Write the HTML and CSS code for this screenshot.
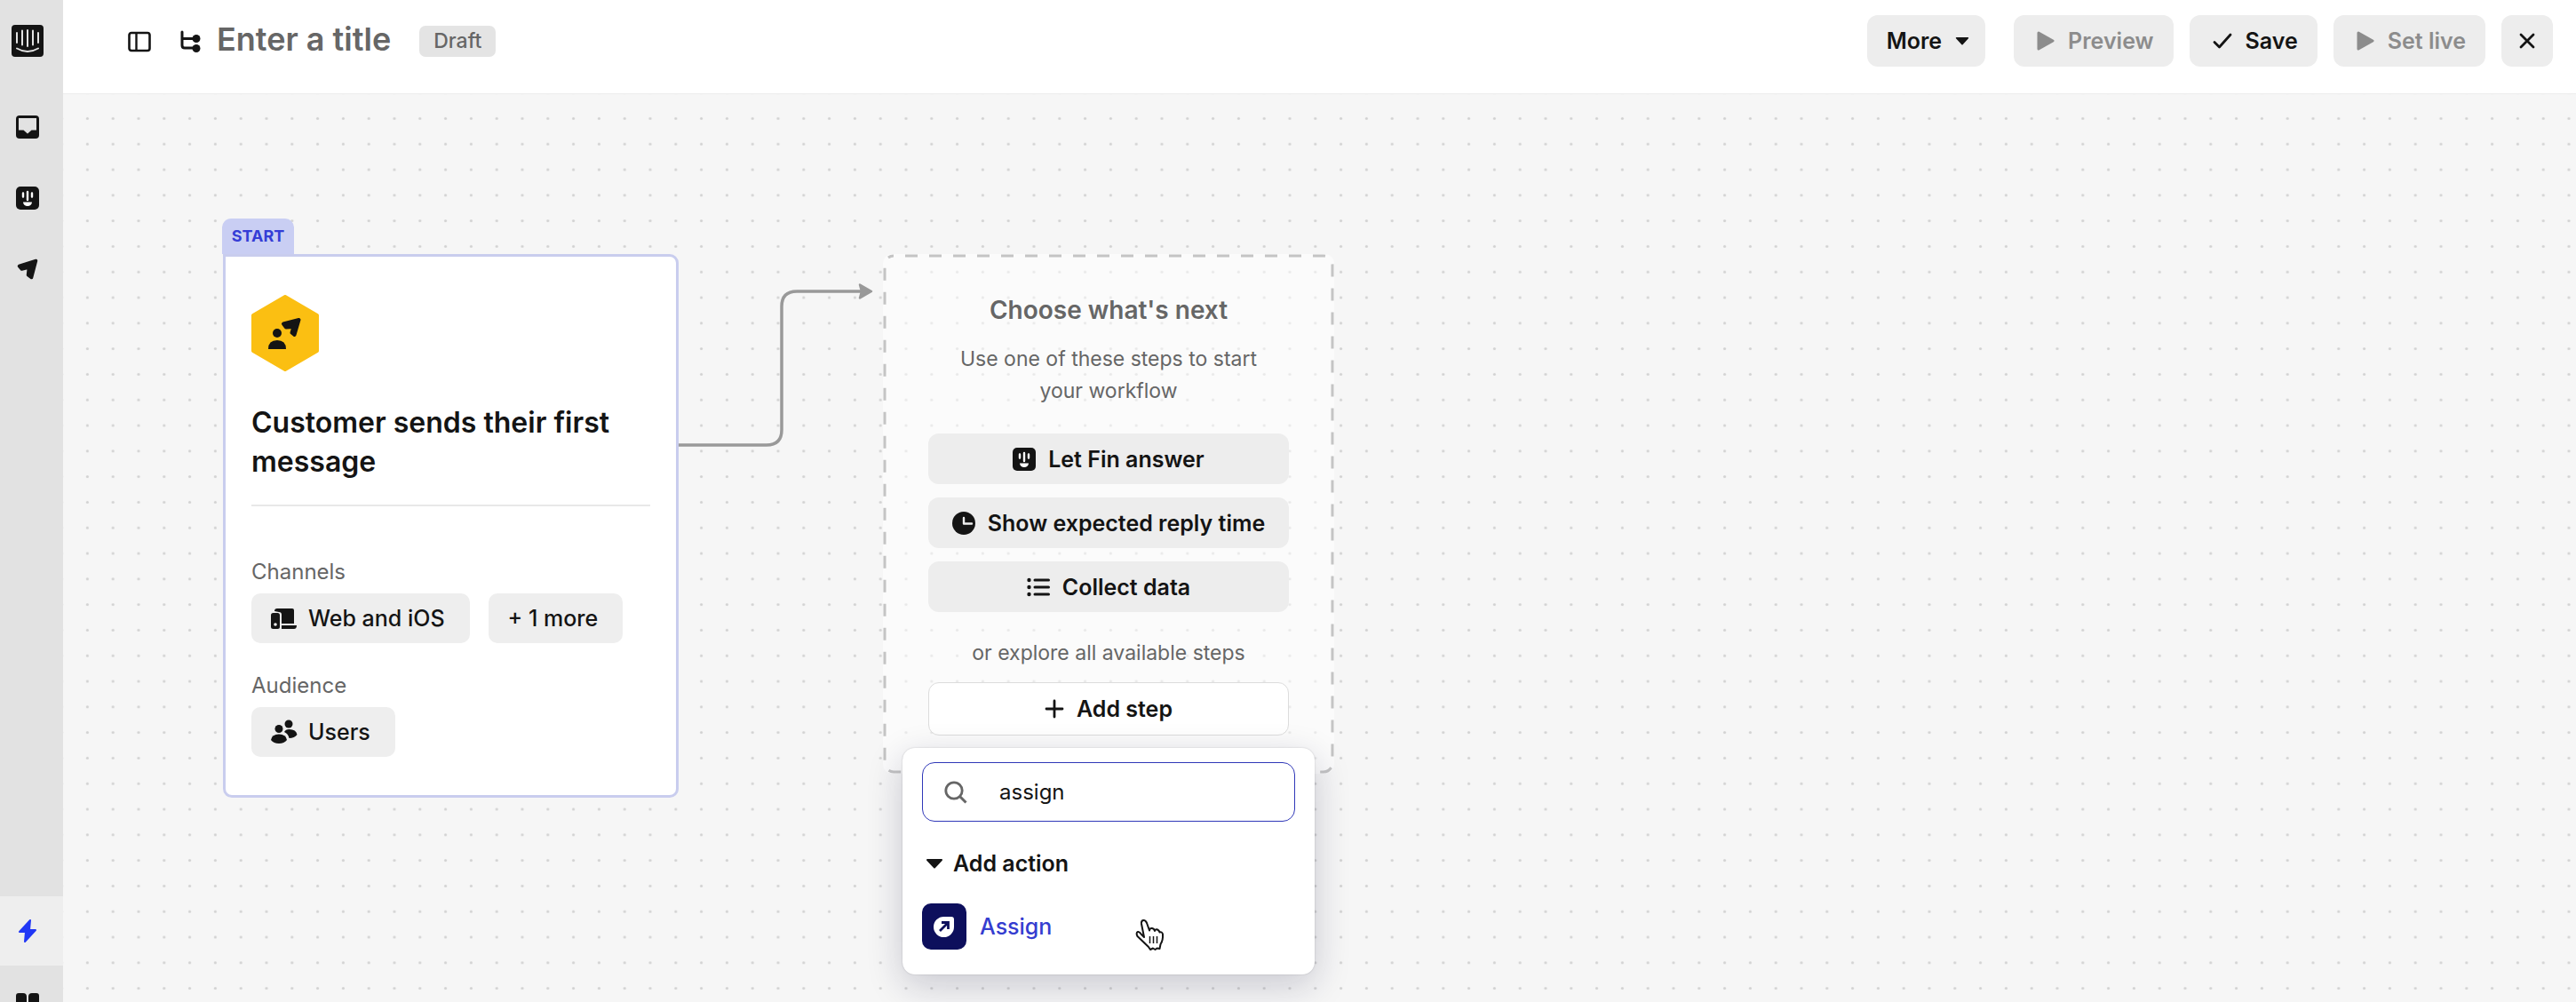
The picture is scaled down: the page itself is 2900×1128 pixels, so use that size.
FILE: index.html
```html
<!DOCTYPE html>
<html lang="en">
    <head>
        <meta charset="utf-8">
        <title>Workflow builder</title>
        <link rel="stylesheet" href="styles.css">
    </head>
    <body>
        <!-- shared icons -->
        <svg class="sprite" aria-hidden="true">
            <symbol id="fin" viewBox="0 0 26 26">
                <rect x="0" y="0" width="26" height="26" rx="5" fill="#141414"/>
                <path d="M8 7.500v4M13 6v9M18 7.500v4" stroke="#fff" stroke-width="2.400" stroke-linecap="round"/>
                <path d="M8 17.500h10a5 4.500 0 0 1-10 0z" fill="#fff"/>
            </symbol>
            <symbol id="plane" viewBox="0 0 24 24">
                <path d="M2.500 8.500 21.500 2.500 16.500 21.500 12.500 18.500 13.500 10 5.500 12z" fill="#141414" stroke="#141414" stroke-width="3.500" stroke-linejoin="round"/>
            </symbol>
            <symbol id="play" viewBox="0 0 20 22">
                <path d="M2 2 18 11 2 20z" fill="#8c8c8c" stroke="#8c8c8c" stroke-width="3" stroke-linejoin="round"/>
            </symbol>
            <symbol id="caret" viewBox="0 0 20 12">
                <path d="M2 2H18L10 10.500z" fill="#141414" stroke="#141414" stroke-width="2" stroke-linejoin="round"/>
            </symbol>
        </svg>

        <div class="app">
            <nav class="sidebar">
                <a class="logo" href="#" aria-label="Home">
                    <svg width="36" height="36" viewBox="0 0 36 36">
                        <rect width="36" height="36" rx="4" fill="#141414"/>
                        <path d="M6 9v11M12 6.500v16M18 6v18M24 6.500v16M30 9v11" stroke="#e2e2e2" stroke-width="2" stroke-linecap="round"/>
                        <path d="M6 26.500q12 7 24 0" fill="none" stroke="#e2e2e2" stroke-width="2" stroke-linecap="round"/>
                    </svg>
                </a>
                <a class="nav-item" href="#" aria-label="Inbox">
                    <svg width="26" height="26" viewBox="0 0 26 26">
                        <rect width="26" height="26" rx="4" fill="#141414"/>
                        <path d="M3 3h20v13.500h-5.500L13 20.500 8.500 16.500H3z" fill="#e2e2e2"/>
                    </svg>
                </a>
                <a class="nav-item" href="#" aria-label="Fin"><svg width="26" height="26"><use href="#fin"/></svg></a>
                <a class="nav-item" href="#" aria-label="Outbound"><svg width="24" height="24"><use href="#plane"/></svg></a>
                <a class="nav-item selected" href="#" aria-label="Automation">
                    <svg width="22" height="28" viewBox="0 0 22 28">
                        <path d="M14 2 2 15h7l-1 11L20 13h-7z" fill="#2137f5" stroke="#2137f5" stroke-width="2" stroke-linejoin="round"/>
                    </svg>
                </a>
                <a class="nav-item cut" href="#" aria-label="Help center">
                    <svg width="26" height="24" viewBox="0 0 26 24">
                        <path d="M0 3q0-3 3-3h5q4 0 4 4v20H0zM26 3q0-3-3-3h-5q-4 0-4 4v20h12z" fill="#141414"/>
                    </svg>
                </a>
            </nav>

            <div class="main">
                <header class="topbar">
                    <button class="icon-button" aria-label="Toggle panel">
                        <svg width="26" height="24" viewBox="0 0 26 24">
                            <rect x="1.500" y="2" width="23" height="20" rx="2.500" fill="none" stroke="#141414" stroke-width="2.600"/>
                            <path d="M9.500 2v20" stroke="#141414" stroke-width="2.400"/>
                        </svg>
                    </button>
                    <svg class="tree" width="24" height="26" viewBox="0 0 24 26">
                        <path d="M2 2v15q0 3 3 3h12M2 9.500h15" fill="none" stroke="#141414" stroke-width="3" stroke-linecap="round"/>
                        <circle cx="18" cy="9.500" r="4.500" fill="#141414"/>
                        <circle cx="18" cy="20.500" r="4.500" fill="#141414"/>
                    </svg>
                    <h1 class="title">Enter a title</h1>
                    <span class="badge">Draft</span>
                    <div class="actions">
                        <button class="button more">More <svg width="16" height="12"><use href="#caret"/></svg></button>
                        <button class="button" disabled><svg width="20" height="22"><use href="#play"/></svg> Preview</button>
                        <button class="button">
                            <svg width="22" height="20" viewBox="0 0 22 20"><path d="M2 11.500 7.500 17 20 3" fill="none" stroke="#141414" stroke-width="2.800" stroke-linecap="round" stroke-linejoin="round"/></svg>
                            Save
                        </button>
                        <button class="button" disabled><svg width="20" height="22"><use href="#play"/></svg> Set live</button>
                        <button class="button close" aria-label="Close">
                            <svg width="18" height="18" viewBox="0 0 18 18"><path d="M2 2 16 16M16 2 2 16" stroke="#141414" stroke-width="2.800" stroke-linecap="round"/></svg>
                        </button>
                    </div>
                </header>

                <main class="canvas">
                    <svg class="dots" aria-hidden="true">
                        <defs>
                            <pattern id="dot" x="13" y="13" width="28.800" height="28.800" patternUnits="userSpaceOnUse">
                                <circle cx="14.400" cy="14.400" r="1.600" fill="#d2d2d2"/>
                            </pattern>
                        </defs>
                        <rect width="100%" height="100%" fill="url(#dot)"/>
                    </svg>

                    <section class="start">
                        <span class="start-tab">START</span>
                        <div class="start-card">
                            <svg class="hex" width="76" height="86" viewBox="0 0 76 86">
                                <path d="M38 2 74 23V63L38 84 2 63V23z" fill="#fbbf12" stroke="#fbbf12" stroke-width="4" stroke-linejoin="round"/>
                                <circle cx="29" cy="43" r="5" fill="#141414"/>
                                <path d="M19 61q0-10 10-10t10 10z" fill="#141414"/>
                                <path d="M36 32.500 53.500 28 48.500 45 45.500 42.500 47.500 36 39 36.500z" fill="#141414" stroke="#141414" stroke-width="4" stroke-linejoin="round"/>
                            </svg>
                            <h2>Customer sends their first message</h2>
                            <hr>
                            <div class="label">Channels</div>
                            <div class="chips">
                                <button class="chip">
                                    <svg width="30" height="24" viewBox="0 0 30 24">
                                        <path d="M4 4q0-3 3-3h17q2 0 2 2v15H12V8q0-3-3-3z" fill="#141414"/>
                                        <path d="M12 20h17q0 4-3 4H12z" fill="#141414"/>
                                        <rect x="0" y="6" width="10" height="18" rx="2.500" fill="#141414"/>
                                        <circle cx="5" cy="19" r="1.800" fill="#eee"/>
                                    </svg>
                                    Web and iOS
                                </button>
                                <button class="chip">+ 1 more</button>
                            </div>
                            <div class="label">Audience</div>
                            <div class="chips">
                                <button class="chip">
                                    <svg width="30" height="28" viewBox="0 0 30 28">
                                        <circle cx="20" cy="5" r="4.500" fill="#141414"/>
                                        <circle cx="9" cy="10.500" r="4.500" fill="#141414"/>
                                        <path d="M0 23q1-6.500 9-6.500T18 23q-3 4-9 4t-9-4z" fill="#141414"/>
                                        <path d="M15 14q1.500-3 5.500-3 8 0 9 6-3 4-9 4-1-5-5.500-7z" fill="#141414"/>
                                    </svg>
                                    Users
                                </button>
                            </div>
                        </div>
                    </section>

                    <svg class="connector" width="234" height="190" viewBox="0 0 234 190" aria-hidden="true">
                        <path d="M0 182H99q17 0 17-17V26q0-17 17-17H206" fill="none" stroke="#999" stroke-width="3.500"/>
                        <path d="M204 1.500 217 9 204 16.500 206 9z" fill="#999" stroke="#999" stroke-width="2.500" stroke-linejoin="round"/>
                    </svg>

                    <section class="next">
                        <svg class="outline" aria-hidden="true">
                            <rect x="2" y="2" width="100%" height="100%" rx="10"/>
                        </svg>
                        <h3>Choose what's next</h3>
                        <p>Use one of these steps to start your workflow</p>
                        <button class="step"><svg width="26" height="26"><use href="#fin"/></svg> Let Fin answer</button>
                        <button class="step">
                            <svg width="26" height="26" viewBox="0 0 26 26">
                                <circle cx="13" cy="13" r="13" fill="#141414"/>
                                <path d="M13 7v6.500h9" fill="none" stroke="#eee" stroke-width="2.400" stroke-linecap="round" stroke-linejoin="round"/>
                            </svg>
                            Show expected reply time
                        </button>
                        <button class="step">
                            <svg width="26" height="22" viewBox="0 0 26 22">
                                <path d="M9 3h15.500M9 11h15.500M9 19h15.500" stroke="#141414" stroke-width="3" stroke-linecap="round"/>
                                <circle cx="2.500" cy="3" r="2.200" fill="#141414"/>
                                <circle cx="2.500" cy="11" r="2.200" fill="#141414"/>
                                <circle cx="2.500" cy="19" r="2.200" fill="#141414"/>
                            </svg>
                            Collect data
                        </button>
                        <p class="or">or explore all available steps</p>
                        <button class="step add">
                            <svg width="22" height="22" viewBox="0 0 22 22"><path d="M11 2v18M2 11h18" stroke="#141414" stroke-width="2.800" stroke-linecap="round"/></svg>
                            Add step
                        </button>

                        <div class="menu">
                            <label class="search">
                                <svg width="26" height="26" viewBox="0 0 26 26">
                                    <circle cx="11" cy="11" r="9.200" fill="none" stroke="#666" stroke-width="2.800"/>
                                    <path d="M18 18 24.500 24.500" stroke="#666" stroke-width="3"/>
                                </svg>
                                <input type="text" value="assign" aria-label="Search steps">
                            </label>
                            <button class="group"><svg width="20" height="12"><use href="#caret"/></svg> Add action</button>
                            <button class="option">
                                <svg width="50" height="52" viewBox="0 0 50 52">
                                    <rect width="50" height="52" rx="10" fill="#0d0f5c"/>
                                    <path d="M24.500 15H33q3 0 3 3v8.500a11.500 11.500 0 1 1-11.500-11.500z" fill="#fff"/>
                                    <path d="M20 31 29 22M22 21.500h7.500V29" fill="none" stroke="#0d0f5c" stroke-width="2.800"/>
                                </svg>
                                Assign
                            </button>
                            <svg class="pointer" width="34" height="38" viewBox="0 0 34 38" aria-hidden="true">
                                <path d="M10 21 7 6q-.5-3.500 2-4T13 5l3 8.500q.5-3 3-2.500t3 3q1-2.500 3-1.500t2.500 3q2.500-1 3.500 2 .5 7-2.500 11.500l-1 5-3-.5-2 1.500-2.500-1.500-3 1.500-2-3L2.500 20q-2-4 .5-5 2-.5 4 3z" fill="#fff" stroke="#141414" stroke-width="2" stroke-linejoin="round"/>
                                <path d="M16.500 20v8M20.500 20v8M24.500 20v8" stroke="#141414" stroke-width="1.500"/>
                            </svg>
                        </div>
                    </section>
                </main>
            </div>
        </div>
    </body>
</html>
```

FILE: styles.css
```css
* {
    box-sizing: border-box;
}

body {
    margin: 0;
    color: #141414;
    font-family: Inter, "Liberation Sans", sans-serif;
    font-size: 24px;
}

button {
    border: none;
    background: none;
    padding: 0;
    color: inherit;
    font: inherit;
    font-size: 25px;
    font-weight: 600;
    display: flex;
    align-items: center;
}

svg {
    flex: none;
}

.sprite {
    position: absolute;
    width: 0;
    height: 0;
}

.app {
    display: flex;
    height: 100vh;
    overflow: hidden;
}

/* left navigation */

.sidebar {
    width: 71px;
    flex: none;
    display: flex;
    flex-direction: column;
    background-color: #e2e2e2;
}

.logo {
    height: 103px;
    padding: 28px 0 0 13px;
}

.nav-item {
    height: 80px;
    flex: none;
    padding-right: 9px;
    display: flex;
    align-items: center;
    justify-content: center;
}

.selected {
    height: 78px;
    margin-top: auto;
    background-color: #eee;
}

.cut {
    height: 41px;
    overflow: hidden;
    padding-top: 31px;
    align-items: flex-start;
}

/* top bar */

.main {
    flex: 1;
    min-width: 0;
    display: flex;
    flex-direction: column;
}

.topbar {
    height: 105px;
    flex: none;
    padding: 17px 26px 0 73px;
    display: flex;
    align-items: flex-start;
    background-color: #fff;
}

.icon-button {
    height: 60px;
}

.tree {
    height: 60px;
    margin-left: 33px;
}

.title {
    margin: 0 0 0 17px;
    line-height: 54px;
    font-size: 36px;
    font-weight: 600;
    color: #666;
}

.badge {
    margin: 12px 0 0 32px;
    padding: 0 16px;
    border-radius: 7px;
    background-color: #e4e4e4;
    color: #666;
    font-size: 23px;
    font-weight: 500;
    line-height: 35px;
}

.actions {
    margin-left: auto;
    display: flex;
    gap: 18px;
}

.button {
    height: 58px;
    padding: 0 22px 0 26px;
    gap: 15px;
    border-radius: 12px;
    background-color: #ededed;
}

.button:disabled {
    color: #8c8c8c;
}

.more {
    margin-right: 14px;
    padding: 0 18px 0 22px;
}

.close {
    padding: 0 20px;
}

/* workflow canvas */

.canvas {
    flex: 1;
    min-height: 0;
    position: relative;
    border-top: 1px solid #ededed;
    background-color: #f6f6f6;
}

.dots {
    position: absolute;
    width: 100%;
    height: 100%;
}

.start {
    position: absolute;
    left: 179px;
    top: 140px;
    width: 514px;
}

.start-tab {
    display: block;
    width: 81px;
    border-radius: 10px 10px 0 0;
    background-color: #c9cef3;
    color: #353dd6;
    font-size: 18px;
    font-weight: 700;
    line-height: 40px;
    text-align: center;
}

.start-card {
    margin-left: 1px;
    padding: 43px 29px;
    border: 3px solid #c9cdee;
    border-radius: 0 10px 10px 10px;
    background-color: #fff;
}

.hex {
    display: block;
}

.start-card h2 {
    margin: 36px 0 26px;
    font-size: 32px;
    font-weight: 600;
    line-height: 44px;
}

.start-card hr {
    margin: 0 0 58px;
    border: none;
    border-top: 2px solid #e8e8e8;
}

.label {
    line-height: 32px;
    margin-bottom: 8px;
    color: #666;
}

.chips {
    display: flex;
    gap: 21px;
    margin-bottom: 32px;
}

.chips:last-child {
    margin-bottom: 0;
}

.chip {
    height: 56px;
    padding: 0 28px 0 22px;
    gap: 12px;
    border-radius: 10px;
    background-color: #eee;
    font-weight: 500;
}

.connector {
    position: absolute;
    left: 693px;
    top: 213px;
}

.next {
    position: absolute;
    left: 923px;
    top: 180px;
    width: 508px;
    padding: 43px 51px;
    border-radius: 10px;
    background-color: rgba(255, 255, 255, 0.5);
    text-align: center;
}

.outline {
    position: absolute;
    left: 0;
    top: 0;
    width: 100%;
    height: 100%;
    padding: 0 4px 4px 0;
    overflow: visible;
}

.outline rect {
    fill: none;
    stroke: #c4c4c4;
    stroke-width: 3;
    stroke-dasharray: 14 13;
    stroke-dashoffset: 14;
}

.next h3 {
    margin: 0 0 17px;
    color: #666;
    font-size: 28px;
    font-weight: 600;
    line-height: 40px;
}

.next p {
    margin: 0 30px 30px;
    color: #666;
    font-size: 23px;
    line-height: 36px;
}

.step {
    width: 100%;
    height: 57px;
    margin-bottom: 15px;
    justify-content: center;
    gap: 14px;
    border-radius: 12px;
    background-color: #ededed;
    position: relative;
}

.next .or {
    margin: 28px 0 15px;
}

.add {
    height: 60px;
    margin: 0;
    border: 1px solid #dcdcdc;
    background-color: #fff;
}

/* step picker */

.menu {
    position: absolute;
    left: 22px;
    top: 556px;
    width: 464px;
    padding: 16px 22px 28px;
    border-radius: 14px;
    background-color: #fff;
    box-shadow: 0 0 2px rgba(0, 0, 0, 0.2), 0 12px 40px rgba(20, 20, 60, 0.2);
}

.search {
    height: 67px;
    padding: 0 24px;
    display: flex;
    align-items: center;
    gap: 36px;
    border: 1px solid #3038b8;
    border-radius: 14px;
}

.search input {
    flex: 1;
    min-width: 0;
    padding: 0;
    border: none;
    outline: none;
    color: inherit;
    font: inherit;
}

.group {
    margin: 28px 0 27px;
    padding-left: 4px;
    gap: 11px;
    height: 37px;
}

.option {
    width: 100%;
    gap: 15px;
    color: #353dd0;
    font-weight: 500;
}

.pointer {
    position: absolute;
    left: 262px;
    top: 192px;
}
```
